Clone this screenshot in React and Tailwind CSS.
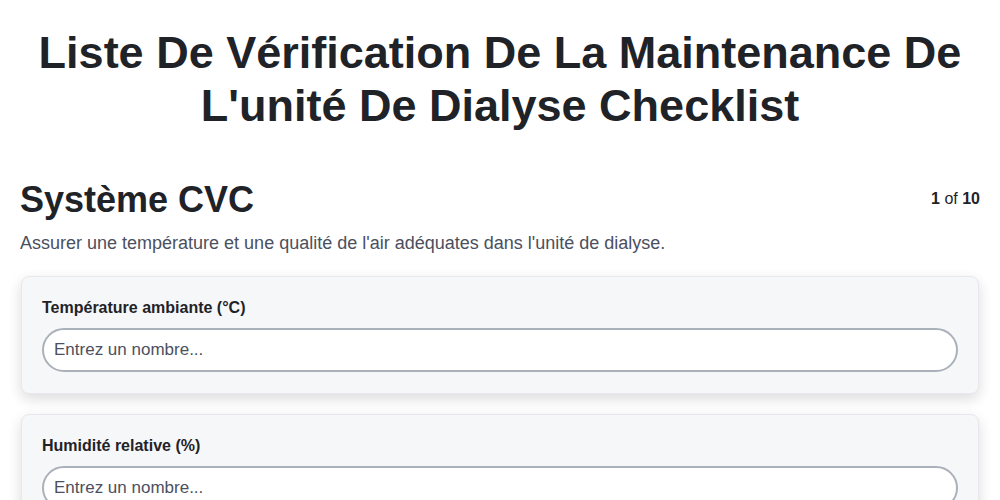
const fields = [
  { label: "Température ambiante (°C)" },
  { label: "Humidité relative (%)" },
  { label: "Pression différentielle (Pa)" }
]

export default function App() {
  return (
    <div className="min-h-screen bg-white px-5 pt-[26px] font-['Liberation_Sans',Arial,sans-serif] text-[#1f2328]">
      <h1 className="text-center text-[45px] font-bold leading-[53px] text-[#1f2328]">
        Liste De Vérification De La Maintenance De L'unité De Dialyse Checklist
      </h1>

      <div className="mt-12 flex items-start justify-between">
        <h2 className="text-[36px] font-bold leading-10">Système CVC</h2>
        <p className="mt-[7px] text-base leading-6">
          <span className="font-bold">1</span> of <span className="font-bold">10</span>
        </p>
      </div>
      <p className="mt-[10px] text-lg leading-[26px] text-[#4b5060]">
        Assurer une température et une qualité de l'air adéquates dans l'unité de dialyse.
      </p>

      <div className="mt-5 flex flex-col gap-5">
        {fields.map((field) => (
          <div
            key={field.label}
            className="mx-px rounded-lg border border-[#e6e8ec] bg-[#f6f7f9] px-5 pt-5 pb-[21px] shadow-[0_5px_14px_rgba(0,0,0,0.14)]"
          >
            <label className="block text-base font-bold leading-[22px] text-[#1f2328]">
              {field.label}
            </label>
            <input
              type="text"
              placeholder="Entrez un nombre..."
              className="mt-[9px] block h-11 w-full rounded-full border-2 border-[#aab1ba] bg-white px-[10px] text-[17px] text-[#1f2328] outline-none placeholder:text-[#4b5060]"
            />
          </div>
        ))}
      </div>
    </div>
  )
}
